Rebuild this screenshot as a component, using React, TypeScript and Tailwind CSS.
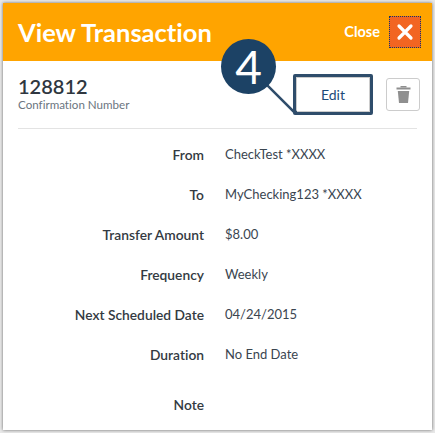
import React from "react";

const rows: [string, string][] = [
  ["From", "CheckTest *XXXX"],
  ["To", "MyChecking123 *XXXX"],
  ["Transfer Amount", "$8.00"],
  ["Frequency", "Weekly"],
  ["Next Scheduled Date", "04/24/2015"],
  ["Duration", "No End Date"],
];

function Row({ label, value, className }: { label: string; value: string; className: string }) {
  return (
    <div className={`flex items-center ${className}`}>
      <div className="w-[201px] text-right text-[13.8px] font-semibold text-[#333a42]">{label}</div>
      <div className="ml-[21px] text-[13px] text-[#3a4550]">{value}</div>
    </div>
  );
}

export default function App() {
  return (
    <div className="relative h-[433px] w-[435px] bg-[#e8e8e8] p-[3px] font-['Lato','Noto_Sans',sans-serif] [font-variant-ligatures:none]">
      <div className="h-[427px] w-[429px] overflow-hidden bg-white shadow-[0_0_3px_rgba(0,0,0,0.55)]">
        <header className="flex h-[58px] items-center bg-[#ffa400] pl-[15px] pr-[11px] text-white">
          <h1 className="text-[25.5px] font-bold">View Transaction</h1>
          <span className="ml-auto text-[14.5px] font-bold">Close</span>
          <button className="ml-[9px] flex h-[32px] w-[32px] items-center justify-center border border-dotted border-[#123a66] bg-[#f26522]">
            <svg width="18" height="18" viewBox="0 0 18 18" fill="none" stroke="white" strokeWidth="3.2" strokeLinecap="round">
              <path d="M3 3L15 15M15 3L3 15" />
            </svg>
          </button>
        </header>
        <div className="mx-[15px] flex h-[68px] items-center border-b border-[#e3e3e3]">
          <div className="-mt-[3px]">
            <div className="text-[20px] font-semibold leading-[24px] text-[#2f3740]">128812</div>
            <div className="text-[11.6px] leading-[14px] text-[#6b7580]">Confirmation Number</div>
          </div>
          <div className="ml-auto mr-[-3px] flex items-center gap-[13px]">
            <button className="flex h-[41px] w-[80px] items-center justify-center rounded-[2px] border-[3px] border-[#2f4d6b] bg-white text-[14px] text-[#1d4a78] outline outline-1 -outline-offset-4 outline-[#cccccc]">
              Edit
            </button>
            <button className="flex h-[33px] w-[34px] items-center justify-center rounded-[3px] border border-[#cccccc] bg-white">
              <svg width="15" height="17" viewBox="0 0 15 17" fill="#8f8f8f">
                <rect x="0.5" y="1.5" width="14" height="2" />
                <rect x="4.5" y="0" width="6" height="1.5" />
                <path d="M1.8 5H13.2L12 17H3Z" />
              </svg>
            </button>
          </div>
        </div>
        <div className="pt-[6px]">
          {rows.map(([label, value]) => (
            <Row key={label} label={label} value={value} className="h-[40px]" />
          ))}
          <Row label="Note" value="" className="mt-[10px] h-[40px]" />
        </div>
      </div>
      <svg className="absolute left-[265px] top-[83px]" width="32" height="32" viewBox="0 0 32 32" fill="none" stroke="#2f4d6b" strokeWidth="2.5">
        <path d="M0 0L29 29H32" />
      </svg>
      <div className="absolute left-[221px] top-[39px] flex h-[55px] w-[55px] items-center justify-center rounded-full bg-[#1c4265] text-[46px] font-normal leading-none text-white">
        4
      </div>
    </div>
  );
}
